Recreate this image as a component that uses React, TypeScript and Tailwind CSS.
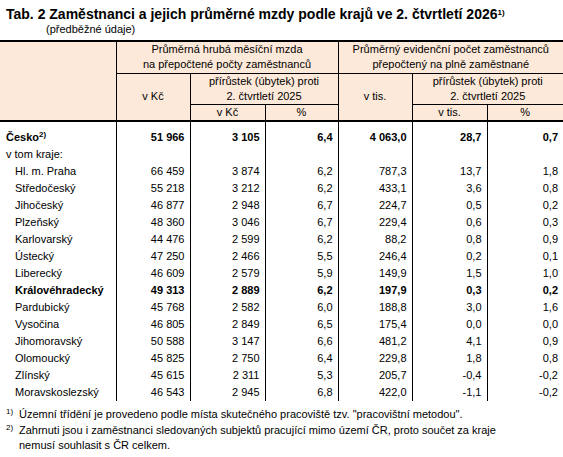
import React from "react";

type Row = {
  name: string;
  values: string[];
  bold?: boolean;
  indent?: boolean;
  sup?: string;
};

const rows: Row[] = [
  { name: "Česko", sup: "2)", bold: true, values: ["51 966", "3 105", "6,4", "4 063,0", "28,7", "0,7"] },
  { name: "v tom kraje:", values: ["", "", "", "", "", ""] },
  { name: "Hl. m. Praha", indent: true, values: ["66 459", "3 874", "6,2", "787,3", "13,7", "1,8"] },
  { name: "Středočeský", indent: true, values: ["55 218", "3 212", "6,2", "433,1", "3,6", "0,8"] },
  { name: "Jihočeský", indent: true, values: ["46 877", "2 948", "6,7", "224,7", "0,5", "0,2"] },
  { name: "Plzeňský", indent: true, values: ["48 360", "3 046", "6,7", "229,4", "0,6", "0,3"] },
  { name: "Karlovarský", indent: true, values: ["44 476", "2 599", "6,2", "88,2", "0,8", "0,9"] },
  { name: "Ústecký", indent: true, values: ["47 250", "2 466", "5,5", "246,4", "0,2", "0,1"] },
  { name: "Liberecký", indent: true, values: ["46 609", "2 579", "5,9", "149,9", "1,5", "1,0"] },
  { name: "Královéhradecký", indent: true, bold: true, values: ["49 313", "2 889", "6,2", "197,9", "0,3", "0,2"] },
  { name: "Pardubický", indent: true, values: ["45 768", "2 582", "6,0", "188,8", "3,0", "1,6"] },
  { name: "Vysočina", indent: true, values: ["46 805", "2 849", "6,5", "175,4", "0,0", "0,0"] },
  { name: "Jihomoravský", indent: true, values: ["50 588", "3 147", "6,6", "481,2", "4,1", "0,9"] },
  { name: "Olomoucký", indent: true, values: ["45 825", "2 750", "6,4", "229,8", "1,8", "0,8"] },
  { name: "Zlínský", indent: true, values: ["45 615", "2 311", "5,3", "205,7", "-0,4", "-0,2"] },
  { name: "Moravskoslezský", indent: true, values: ["46 543", "2 945", "6,8", "422,0", "-1,1", "-0,2"] },
];

const head = "bg-[#fde9d9] border border-black font-normal text-center align-middle p-0";

const App = () => {
  return (
    <div className="w-[563px] h-[457px] bg-white text-black font-['Liberation_Sans',Arial,sans-serif] text-[11px]">
      <div className="pl-[6px] pt-[5px] text-[14px] leading-[18px] font-bold whitespace-nowrap">
        Tab. 2 Zaměstnanci a jejich průměrné mzdy podle krajů ve 2. čtvrtletí 2026
        <sup className="text-[8px]">1)</sup>
      </div>
      <div className="pl-[46px] leading-[13px] mb-[4px]">(předběžné údaje)</div>

      <table className="w-[563px] table-fixed border-collapse">
        <colgroup>
          <col className="w-[116px]" />
          <col className="w-[74px]" />
          <col className="w-[75px]" />
          <col className="w-[73px]" />
          <col className="w-[74px]" />
          <col className="w-[75px]" />
          <col className="w-[76px]" />
        </colgroup>
        <thead className="leading-[15px]">
          <tr className="h-[32px]">
            <th rowSpan={3} className={`${head} border-l-0 border-t-2 border-b-2`} />
            <th colSpan={3} className={`${head} border-t-2`}>
              Průměrná hrubá měsíční mzda
              <br />
              na přepočtené počty zaměstnanců
            </th>
            <th colSpan={3} className={`${head} border-t-2 border-r-0`}>
              Průměrný evidenční počet zaměstnanců
              <br />
              přepočtený na plně zaměstnané
            </th>
          </tr>
          <tr className="h-[31px]">
            <th rowSpan={2} className={`${head} border-b-2`}>v Kč</th>
            <th colSpan={2} className={head}>
              přírůstek (úbytek) proti
              <br />
              2. čtvrtletí 2025
            </th>
            <th rowSpan={2} className={`${head} border-b-2`}>v tis.</th>
            <th colSpan={2} className={`${head} border-r-0`}>
              přírůstek (úbytek) proti
              <br />
              2. čtvrtletí 2025
            </th>
          </tr>
          <tr className="h-[17px]">
            <th className={`${head} border-b-2`}>v Kč</th>
            <th className={`${head} border-b-2`}>%</th>
            <th className={`${head} border-b-2`}>v tis.</th>
            <th className={`${head} border-b-2 border-r-0`}>%</th>
          </tr>
        </thead>
        <tbody className="leading-[17px]">
          {rows.map((r, i) => (
            <tr key={r.name} className={i === 0 ? "h-[25px]" : "h-[17px]"}>
              <td
                className={`p-0 whitespace-nowrap align-bottom ${r.indent ? "pl-[15px]" : "pl-[6px]"} ${
                  r.bold ? "font-bold" : ""
                }`}
              >
                {r.name}
                {r.sup && <sup className="text-[8px]">{r.sup}</sup>}
              </td>
              {r.values.map((v, j) => (
                <td
                  key={j}
                  className={`p-0 pr-[5px] text-right align-bottom border-l border-black whitespace-nowrap ${
                    r.bold ? "font-bold" : ""
                  }`}
                >
                  {v}
                </td>
              ))}
            </tr>
          ))}
        </tbody>
      </table>

      <div className="mt-[6px] leading-[15.5px]">
        <div className="flex">
          <span className="w-[19px] shrink-0 pl-[6px] text-[8px] leading-[10px]">1)</span>
          <span>Územní třídění je provedeno podle místa skutečného pracoviště tzv. "pracovištní metodou".</span>
        </div>
        <div className="flex">
          <span className="w-[19px] shrink-0 pl-[6px] text-[8px] leading-[10px]">2)</span>
          <span>
            Zahrnuti jsou i zaměstnanci sledovaných subjektů pracující mimo území ČR, proto součet za kraje
            <br />
            nemusí souhlasit s ČR celkem.
          </span>
        </div>
      </div>
    </div>
  );
};

export default App;
